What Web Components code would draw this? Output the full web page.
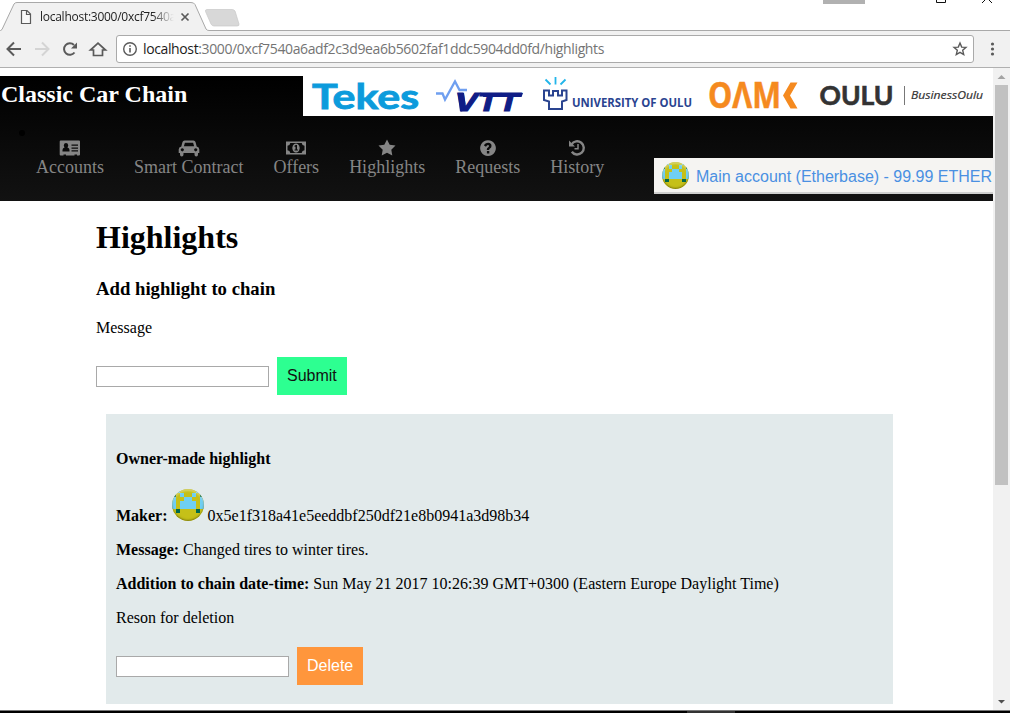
<!DOCTYPE html>
<html lang="en">
<head>
<meta charset="utf-8">
<title>localhost:3000</title>
<style>
html,body{margin:0;height:100%;overflow:hidden;background:#fff}
</style>
</head>
<body>
<car-window></car-window>
<script>
const define = (name, html, after) => {
  const tpl = document.createElement('template');
  tpl.innerHTML = html;
  customElements.define(name, class extends HTMLElement {
    connectedCallback() {
      if (this.shadowRoot) return;
      this.attachShadow({mode: 'open'}).append(tpl.content.cloneNode(true));
      if (after) after(this, this.shadowRoot);
    }
  });
};

/* Spreads its text over the width given in the w attribute */
define('fit-text', `<style>:host{display:inline-block;white-space:pre}span{display:inline-block}</style><span><slot></slot></span>`, (el, root) => {
  const w = +el.getAttribute('w'), s = root.querySelector('span');
  el.style.width = w + 'px';
  requestAnimationFrame(() => {
    const n = el.textContent.length;
    s.style.letterSpacing = ((w - s.getBoundingClientRect().width) / n) + 'px';
  });
});

define('block-avatar', `<style>:host{display:block;width:32px;height:32px;flex:none;border-radius:50%;overflow:hidden;position:relative}
svg{display:block;width:100%;height:100%}
:host::after{content:"";position:absolute;inset:0;border-radius:50%;box-shadow:inset 0 -1px 2px rgba(60,60,0,.55),inset 0 2px 2px rgba(255,255,255,.35)}</style>
<svg viewBox="0 0 8 8" shape-rendering="crispEdges"><path fill="#c5c018" d="M0 0h8v8H0z"/>
<path fill="#6fcff3" d="M0 0h2v1H0zM6 0h2v1H6zM2 1h1v1H2zM5 1h1v1H5zM0 2h1v3H0zM7 2h1v3H7zM3 2h2v1H3zM2 3h4v2H2z"/>
<path fill="#00684e" d="M0 1h1v1H0zM7 1h1v1H7zM1 5h1v1H1zM6 5h1v1H6z"/></svg>`);

define('tab-strip', `<style>
:host{display:block;height:31px;position:relative;background:#fff;font:12px/16px "Open Sans","Noto Sans",sans-serif;color:#222}
svg{position:absolute;left:0;top:0}
.tab{display:flex;align-items:center;padding:9px 0 0 40px;position:relative}
.fade{-webkit-mask:linear-gradient(90deg,#000 112px,transparent 134px);mask:linear-gradient(90deg,#000 112px,transparent 134px);width:137px;height:16px}
</style>
<svg width="1010" height="31"><path d="M0 30.5H1L14 4Q15 2.500 17 2.500H191Q194 2.500 195 4.500L206.500 29Q207 30.500 210 30.500H1010V31H0Z" fill="#f1f1f1"/>
<path d="M0 30.500H.5L2 29.500 14 4Q15 2.500 17 2.500H191Q194 2.500 195 4.500L206 29Q207 30.500 209 30.500H1010" fill="none" stroke="#a9a9a9"/>
<path d="M207 9.500H232Q234 9.500 235 11L239 24Q239.500 26 237 26H214Q212 26 211 24L205.500 11.500Q205 9.500 207 9.500Z" fill="#d8d8d8" stroke="#c8c8c8" stroke-width=".7"/>
<path d="M21.500 10.500h5.500l3.500 3.500v9.500h-9zM26.500 10.500V14.500h4" fill="#fff" fill-opacity=".5" stroke="#5a5a5a" stroke-width="1.200"/>
<path d="M181.500 13.500l7 7m0-7l-7 7" stroke="#5a5a5a" stroke-width="1.700"/>
<path d="M823 0h42v4h-42z" fill="#b1b1b1"/><path d="M936.500 0V2.500h9V0M982 3l3.500-3.500h3L992 3" fill="none" stroke="#111"/></svg>
<div class="tab"><div class="fade"><fit-text w="136">localhost:3000/0xcf7540a</fit-text></div></div>`);

define('address-bar', `<style>
:host{display:flex;box-sizing:border-box;height:37px;background:#f1f1f1;border-bottom:1px solid #b0b0b0;align-items:center;padding-left:5px}
.ic{flex:none;display:block}
.field{box-sizing:border-box;display:flex;align-items:center;width:858px;height:28px;margin-left:5px;border:1px solid #aaa;border-radius:3px;background:#fff;padding:0 5px 0 5px;font:14px/20px "Open Sans","Noto Sans",sans-serif;color:#1c1c1c}
fit-text{margin-left:5px}.g{color:#747474}
.star{margin-left:auto}
</style>
<svg class="ic" width="106" height="30" fill="none" stroke="#5a5a5a" stroke-width="2"><path d="M16 15H3M9 8.500L2.500 15 9 21.500"/><path stroke="#d4d4d4" d="M30 15H43M37 8.500L43.500 15 37 21.500"/><path d="M69.500 18.500A5.800 5.800 0 1 1 69 11"/><path d="M72 8.500V14.500H66z" fill="#5a5a5a" stroke="none"/><path d="M85.500 16H88.500V21.500H97.500V16H100.500L93 9.200Z" stroke-width="1.700"/></svg>
<div class="field">
<svg width="16" height="16" viewBox="0 0 16 16"><circle cx="8" cy="8" r="6.300" fill="none" stroke="#5a5a5a" stroke-width="1.400"/><path d="M7.200 7h1.600v4.500H7.200zM7.200 4.300h1.600v1.500H7.200z" fill="#5a5a5a"/></svg>
<fit-text w="461">localhost<span class="g">:3000/0xcf7540a6adf2c3d9ea6b5602faf1ddc5904dd0fd/highlights</span></fit-text>
<svg class="star" width="16" height="16" viewBox="0 0 16 16"><path d="M8 2l1.700 4.100 4.300.3-3.300 2.900 1 4.300L8 11.300l-3.700 2.300 1-4.300L2 6.400l4.300-.3z" fill="none" stroke="#5a5a5a" stroke-width="1.400"/></svg>
</div>
<svg class="ic" width="36" height="30" fill="#5a5a5a"><circle cx="18.500" cy="10" r="1.600"/><circle cx="18.500" cy="15" r="1.600"/><circle cx="18.500" cy="20" r="1.600"/></svg>`);

define('partner-logos', `<style>:host{display:block;width:690px;height:40px;background:#fff}svg{display:block}</style>
<svg width="690" height="40" viewBox="303 76 690 40">
<text x="312" y="108.500" font-family="Lato" font-weight="700" font-size="35" textLength="107" lengthAdjust="spacingAndGlyphs" fill="#0c9bdc" stroke="#0c9bdc" stroke-width=".9">Tekes</text>
<path d="M436 93.500H442.500L445 99.500 455 81.500 459.500 90H467" fill="none" stroke="#6f9ff0" stroke-width="2.300"/>
<text x="455" y="111" font-family="Liberation Sans" font-weight="bold" font-style="italic" font-size="25" textLength="64" lengthAdjust="spacingAndGlyphs" fill="#101d86" stroke="#101d86" stroke-width="1">VTT</text><path d="M484 93H523L521.500 97H483z" fill="#101d86"/><path d="M457.500 93H464L465.500 104 462 111.500H460z" fill="#101d86"/>
<path d="M545.500 79.500l5 5M555.500 77v7.500M565.500 79.500l-5 5" stroke="#22b5ea" stroke-width="1.800"/>
<path d="M544 90.500H549V95.500H553V91H558V95.500H562V90.500H566.500V100L562 101.500V109H549V101.500L544 100Z" fill="none" stroke="#2a4490" stroke-width="2"/>
<text x="572" y="107" font-family="Open Sans" font-weight="700" font-size="12" textLength="120" lengthAdjust="spacingAndGlyphs" fill="#2a4490">UNIVERSITY OF OULU</text>
<text x="708" y="108.300" font-family="Open Sans" font-weight="700" font-size="35" textLength="73" lengthAdjust="spacingAndGlyphs" fill="#f58a1f" stroke="#f58a1f" stroke-width=".5">OΛM</text><path d="M790.500 82.500H797.500L790 95.500 797.500 108.500H790.500L783 95.500Z" fill="#f58a1f"/>
<text x="819.500" y="105" font-family="Lato" font-weight="700" font-size="26" textLength="74" lengthAdjust="spacingAndGlyphs" fill="#333" stroke="#333" stroke-width=".6">OULU</text>
<path d="M904.500 86V105" stroke="#777"/>
<text x="911" y="99" font-family="Open Sans" font-style="italic" font-weight="400" font-size="11.500" textLength="72" lengthAdjust="spacingAndGlyphs" fill="#333" stroke="#333" stroke-width=".2">BusinessOulu</text>
</svg>`);

define('nav-item', `<style>:host{display:flex;flex-direction:column;align-items:center;color:#858585;font:18px/20px "Liberation Serif",serif}
svg{display:block;width:22px;height:18px;fill:#858585}</style>
<svg viewBox="0 0 22 18"></svg><span><slot></slot></span>`, (el, root) => {
  const icons = {
    card: '<path fill-rule="evenodd" d="M1.700 1.500H20q1 0 1 1V15.500q0 1-1 1H18V15.500H15.500v1H7V15.500H4.500v1H1.700q-1 0-1-1V2.500q0-1 1-1zM3.500 12.500H10.500Q10.800 9 8.500 8.800 10 6 8.500 4.500 7 3.500 5.500 4.500 4 6 5.500 8.800 3.200 9 3.500 12.500zM12.500 5.500V6.700H19V5.500zM12.500 8.500V9.700H19V8.500zM12.500 11.300V12.500H19V11.300z"/>',
    car: '<path fill-rule="evenodd" d="M6.500 1.500H15.500Q17 1.500 17.500 3L18.700 7.500Q21.300 8.200 21.300 10.500V14H20V15.500Q20 17.500 18.300 17.500 16.500 17.500 16.500 15.500V14H5.500V15.500Q5.500 17.500 3.700 17.500 2 17.500 2 15.500V14H.7V10.500Q.7 8.200 3.300 7.500L4.500 3Q5 1.500 6.500 1.500zM6.900 3.700L5.900 7.200H16.100L15.100 3.700zM4.300 9.200a1.600 1.600 0 1 0 .01 0zM17.700 9.200a1.600 1.600 0 1 0 .01 0z"/>',
    money: '<path fill-rule="evenodd" d="M1 2.500H21V15.500H1zM5.300 4Q5 6.500 2.500 6.700V11.300Q5 11.500 5.300 14H16.700Q17 11.500 19.500 11.300V6.700Q17 6.500 16.700 4z"/><path fill-rule="evenodd" d="M11 4.500a3.700 4.500 0 1 0 .01 0zM9.500 11.500V10.500H10.500V7.700H9.500V6.800L10.800 6H12V10.500H13V11.500z"/>',
    star: '<path d="M11 .5l2.700 5.300 5.800.8-4.200 4.100 1 5.800L11 13.800 5.700 16.500l1-5.800L2.500 6.600l5.800-.8z"/>',
    help: '<path fill-rule="evenodd" d="M11 1.200a7.900 7.900 0 1 0 .01 0zM9.900 12H12.300V14.400H9.900zM7 6.500Q8 3.800 11.200 3.800 14.500 4 14.500 6.900 14.500 8.600 13 9.500 12.200 10 12.200 10.900H9.800Q9.700 9.300 11 8.600 12 8 12 7.100 11.900 6.100 11 6.100 9.900 6.100 9 7.700z"/>',
    hist: '<path d="M5.500 5.500A6.600 6.600 0 1 1 5.800 12.700" fill="none" stroke="#858585" stroke-width="2.400"/><path d="M3 1.500V7.500H9z"/><path d="M12 5V9.800H8.500" fill="none" stroke="#858585" stroke-width="1.500"/>'
  };
  root.querySelector('svg').innerHTML = icons[el.getAttribute('icon')];
});

define('account-chip', `<style>:host{display:flex;box-sizing:border-box;width:339px;height:36px;background:#f5f4f2;border-bottom:2px solid #cfcfcf;padding:4px 0 0 8px;font:16px/29px "Liberation Sans",sans-serif;color:#4a90e2;white-space:nowrap}
block-avatar{width:27px;height:27px;margin-right:7px}</style>
<block-avatar></block-avatar><fit-text w="296">Main account (Etherbase) - 99.99 ETHER</fit-text>`);

define('site-header', `<style>
:host{display:flex;flex-direction:column;height:125px;background:linear-gradient(#000,#121212)}
.top{display:flex;justify-content:space-between;height:40px}
h2{margin:5px 0 0 1px;font:bold 24px/27px "Liberation Serif",serif;color:#fff;white-space:nowrap}
.row{display:flex;align-items:flex-start}
.bul{width:6px;height:6px;border-radius:50%;background:#000;margin:14px 11px 0 19px}
nav{display:flex;gap:30px;padding-top:23px;width:618px;white-space:nowrap}
account-chip{margin-top:42px}
</style>
<div class="top"><h2>Classic Car Chain</h2><partner-logos></partner-logos></div>
<div class="row"><i class="bul"></i><nav><nav-item icon="card">Accounts</nav-item><nav-item icon="car">Smart Contract</nav-item><nav-item icon="money">Offers</nav-item><nav-item icon="star">Highlights</nav-item><nav-item icon="help">Requests</nav-item><nav-item icon="hist">History</nav-item></nav><account-chip></account-chip></div>`);

define('action-form', `<style>:host{display:flex;align-items:center;gap:8px;height:38px}
input{box-sizing:border-box;width:173px;height:21px;margin:1px 0 0;border:1px solid #a9a9a9;background:#fff;padding:1px;border-radius:0}
button{height:38px;padding:0 10px;border:0;border-radius:0;margin:0;background:var(--bg);color:var(--fg);font:16px/36px "Liberation Sans",sans-serif}</style>
<input type="text"><button><slot></slot></button>`);

define('highlight-card', `<style>:host{display:block;box-sizing:border-box;width:787px;height:290px;margin:19px 0 0 10px;background:#e2eaeb;padding:36px 10px 0;font:16px/18px "Liberation Serif",serif}
h4,p{margin:0 0 16px;font-size:16px}h4{margin-bottom:21px}
.maker{display:flex;align-items:flex-end}block-avatar{margin:0 4px 4px}
action-form{margin-top:20px;--bg:#ff963c;--fg:#fff}</style>
<h4>Owner-made highlight</h4>
<p class="maker"><b>Maker:</b><block-avatar></block-avatar><span>0x5e1f318a41e5eeddbf250df21e8b0941a3d98b34</span></p>
<p><b>Message:</b> Changed tires to winter tires.</p>
<p><b>Addition to chain date-time:</b> Sun May 21 2017 10:26:39 GMT+0300 (Eastern Europe Daylight Time)</p>
<p>Reson for deletion</p>
<action-form>Delete</action-form>`);

define('highlights-page', `<style>:host{display:block;padding:18px 0 0 96px;font:16px/18px "Liberation Serif",serif;color:#000}
h1{margin:0;font-size:32px;line-height:36px}h3{margin:23px 0 20px;font-size:18.72px;line-height:21px}p{margin:0 0 20px}
action-form{--bg:#2dff91;--fg:#111}</style>
<h1>Highlights</h1><h3>Add highlight to chain</h3><p>Message</p><action-form>Submit</action-form><highlight-card></highlight-card>`);

define('scroll-rail', `<style>:host{display:flex;flex-direction:column;align-items:center;width:17px;background:#f1f1f1;flex:none}
i{width:13px;height:400px;background:#c1c1c1}svg{display:block}.b{margin-top:auto}</style>
<svg width="17" height="17"><path d="M8.500 7L12.500 11H4.500z" fill="#a3a3a3"/></svg><i></i><svg class="b" width="17" height="17"><path d="M5 7H12L8.500 10.500z" fill="#505050"/></svg>`);

define('car-window', `<style>:host{display:flex;flex-direction:column;width:1010px;height:713px;overflow:hidden;background:#fff}
.view{display:flex;height:642px}main{width:993px;padding-top:8px;box-sizing:border-box;overflow:hidden}
footer{height:2px;border-top:1px solid #777;background:linear-gradient(90deg,#000 687px,#333 687px,#333 735px,#000 735px)}</style>
<tab-strip></tab-strip><address-bar></address-bar>
<div class="view"><main><site-header></site-header><highlights-page></highlights-page></main><scroll-rail></scroll-rail></div><footer></footer>`);
</script>
</body>
</html>
